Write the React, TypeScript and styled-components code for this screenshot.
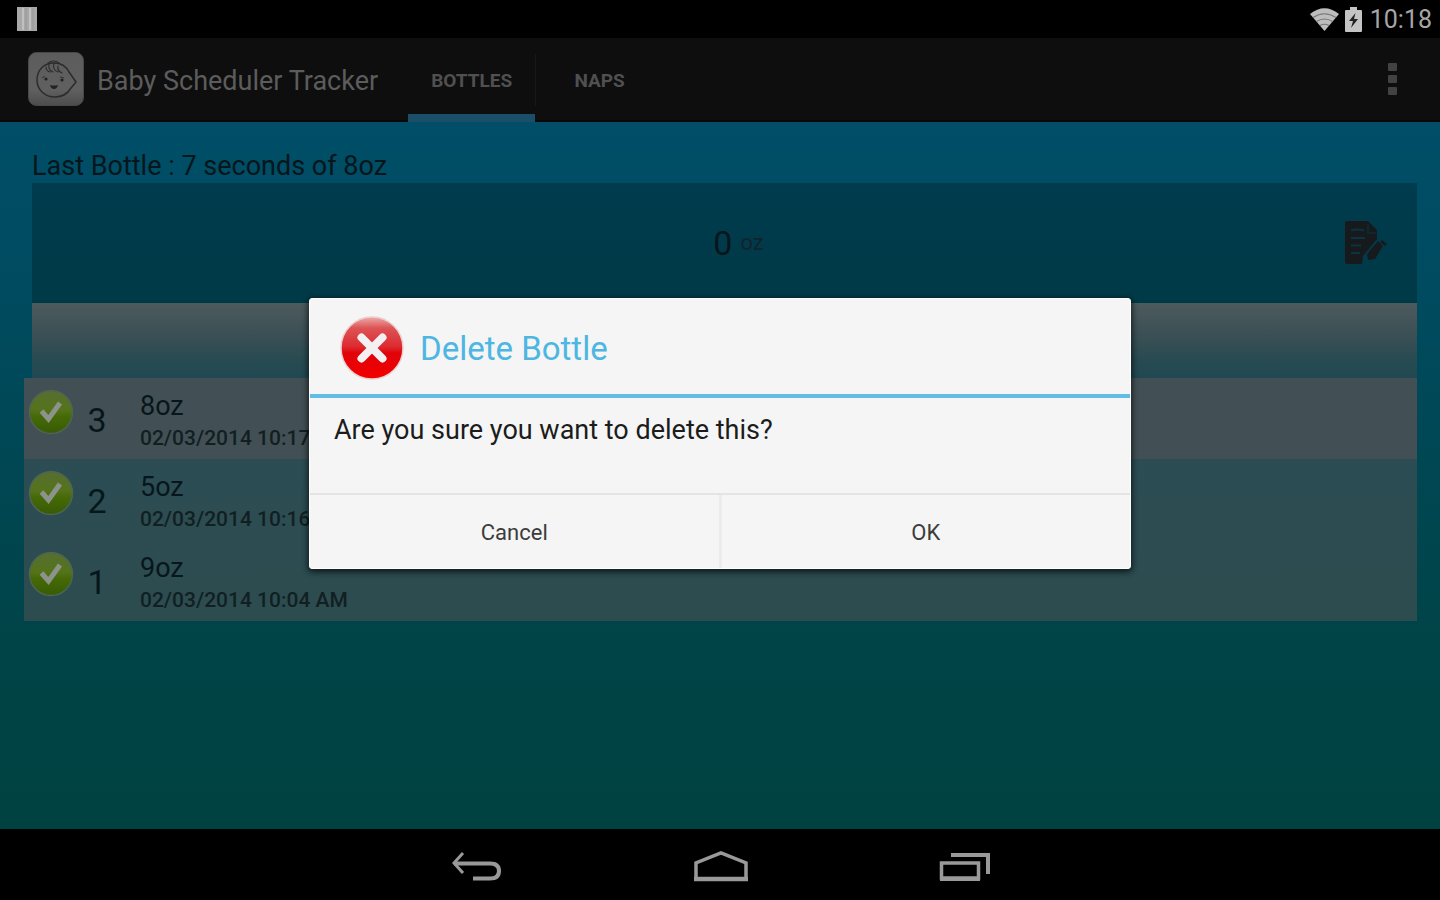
import React from "react";
import styled, { createGlobalStyle } from "styled-components";

const GlobalStyle = createGlobalStyle`
  *, *::before, *::after { box-sizing: border-box; }
  body { margin: 0; background: #000; font-family: Roboto, "Liberation Sans", sans-serif; }
  button { font: inherit; border: 0; padding: 0; background: none; color: inherit; cursor: pointer; }
  h1, h2, p, ul { margin: 0; padding: 0; font-weight: 400; }
  ul { list-style: none; }
  svg { display: block; flex: none; }
`;

const Screen = styled.div`
  display: flex;
  flex-direction: column;
  min-height: 100vh;
`;

const StatusBar = styled.header`
  display: flex;
  align-items: center;
  justify-content: space-between;
  height: 38px;
  padding: 0 8px 0 17px;
  background: #000;
`;

const StatusIcons = styled.div`
  display: flex;
  align-items: center;
  gap: 6px;
`;

const Clock = styled.time`
  margin-left: 2px;
  padding-top: 2px;
  font-size: 25px;
  line-height: 36px;
  color: #a6a6a6;
`;

const AppWindow = styled.div`
  position: relative;
  display: flex;
  flex-direction: column;
  flex: 1;
`;

const ActionBar = styled.div`
  display: flex;
  align-items: stretch;
  height: 84px;
  padding: 0 24px 0 28px;
  background: #0e0e0e;
  border-bottom: 2px solid #090708;
`;

const Brand = styled.div`
  display: flex;
  align-items: center;
  gap: 13px;
  margin-right: 30px;
`;

const AppTitle = styled.h1`
  font-size: 27px;
  line-height: 32px;
  padding-top: 4px;
  color: #5c5c5c;
`;

const Tabs = styled.nav`
  display: flex;
  margin-bottom: -2px;
`;

const Tab = styled.button<{ $active?: boolean }>`
  width: 127px;
  padding-top: 8px;
  border-bottom: 8px solid ${(p) => (p.$active ? "#1b4f69" : "transparent")};
  font-size: 19px;
  font-weight: 700;
  color: #505050;
`;

const TabDivider = styled.span`
  width: 1px;
  height: 52px;
  margin-top: 16px;
  background: #181818;
`;

const MenuButton = styled.button`
  display: flex;
  align-items: center;
  justify-content: center;
  width: 48px;
  margin-left: auto;
`;

const Content = styled.main`
  flex: 1;
  padding: 28px 23px 28px 24px;
  background: linear-gradient(#004e68 0%, #004a5d 30%, #004650 55%, #004447 75%, #004241 100%);
  color: #07161b;
`;

const Summary = styled.section`
  margin-left: 8px;
`;

const LastBottle = styled.p`
  font-size: 27px;
  line-height: 32px;
`;

const AmountPanel = styled.div`
  display: grid;
  grid-template-columns: 1fr auto 1fr;
  align-items: center;
  height: 120px;
  margin-top: 1px;
  padding: 0 30px;
  background: linear-gradient(#003b4e, #003a47);
`;

const Amount = styled.output`
  grid-column: 2;
  display: flex;
  align-items: center;
  gap: 8px;
  padding-left: 28px;
  font-size: 34px;
  line-height: 40px;
`;

const Unit = styled.span`
  font-size: 22px;
  color: #13232c;
`;

const EditButton = styled.button`
  justify-self: end;
`;

const ListHeading = styled.div`
  height: 75px;
  background: linear-gradient(#4d5a5d, #3c5055 40%, #284b51 75%, #214852);
`;

const Bottles = styled.ul`
  background: linear-gradient(#2c4d56, #2c4c4f);
`;

const BottleRow = styled.li<{ $selected?: boolean }>`
  display: flex;
  height: 81px;
  padding-left: 4px;
  background: ${(p) => (p.$selected ? "#425055" : "transparent")};
`;

const TickSlot = styled.div`
  padding-top: 10px;
`;

const RowNumber = styled.span`
  width: 46px;
  padding-top: 4px;
  text-align: center;
  font-size: 34px;
  line-height: 76px;
`;

const RowText = styled.div`
  padding: 12px 0 0 20px;
`;

const RowAmount = styled.p`
  font-size: 27px;
  line-height: 32px;
`;

const RowDate = styled.p`
  font-size: 21px;
  font-weight: 500;
  line-height: 32px;
  color: #121f22;
`;

const NavBar = styled.footer`
  display: flex;
  justify-content: center;
  height: 71px;
  background: #000;
`;

const NavButton = styled.button`
  display: flex;
  align-items: center;
  justify-content: center;
  width: 244px;
  padding: 4px 0 0 2px;
`;

const Overlay = styled.div`
  position: absolute;
  inset: 0;
  display: flex;
  align-items: center;
  justify-content: center;
`;

const Dialog = styled.div`
  width: 822px;
  max-width: 90%;
  background: #f5f5f5;
  border: 1px solid #fff;
  border-radius: 3px;
  box-shadow: 0 2px 6px 1px rgba(0, 0, 0, 0.7);
`;

const DialogHeader = styled.div`
  display: flex;
  align-items: center;
  gap: 16px;
  height: 99px;
  padding-left: 30px;
  border-bottom: 4px solid #62bce3;
`;

const DialogTitle = styled.h2`
  font-size: 33px;
  line-height: 40px;
  padding-top: 4px;
  color: #4db6e2;
`;

const DialogMessage = styled.p`
  height: 95px;
  padding: 16px 24px;
  font-size: 27px;
  line-height: 32px;
  color: #1c1c1c;
`;

const DialogActions = styled.div`
  display: flex;
  height: 75px;
  border-top: 2px solid #e4e4e4;
`;

const DialogButton = styled.button`
  flex: 1;
  padding-top: 2px;
  font-size: 22px;
  color: #3c3c3c;
  & + & { border-left: 3px solid #ececec; }
`;

const NotificationIcon = () => (
  <svg width="20" height="24" viewBox="0 0 20 24" aria-hidden="true">
    <path d="M0 0h20v24H0z" fill="#a8a8a8" />
    <path d="M6 1v22M13 1v22" stroke="#c0c0c0" strokeWidth="2" />
    <path d="M9 1v22M16 1v22" stroke="#989898" strokeWidth="1" />
  </svg>
);

const WifiIcon = () => (
  <svg width="29" height="23" viewBox="0 0 29 23" aria-hidden="true">
    <path d="M0 6Q14.500-5.500 29 6L14.500 23z" fill="#bdbdbd" />
    <path d="M3 9.500q11.500-7.500 23 0M6.500 13.500q8-5 16 0M10 17.500q4.500-2.500 9 0" fill="none" stroke="#777" strokeWidth="1.200" />
  </svg>
);

const BatteryIcon = () => (
  <svg width="17" height="25" viewBox="0 0 17 25" aria-hidden="true">
    <path d="M1 3h4V0h7v3h4q1 0 1 1v20q0 1-1 1H1q-1 0-1-1V4q0-1 1-1z" fill="#c4c4c4" />
    <path d="M10.500 6L4 14h4l-2 7 7-9H9z" fill="#222" />
  </svg>
);

const BabyIcon = () => (
  <svg width="56" height="54" viewBox="0 0 56 54" aria-hidden="true">
    <defs>
      <linearGradient id="babyTile" x1="0" y1="0" x2="0" y2="1">
        <stop offset="0" stopColor="#5c5c5c" />
        <stop offset="0.7" stopColor="#606060" />
        <stop offset="1" stopColor="#4c4c4c" />
      </linearGradient>
    </defs>
    <rect x="0.500" y="0.500" width="55" height="53" rx="8" fill="url(#babyTile)" stroke="#484848" />
    <g fill="none" stroke="#2c2c2c" strokeWidth="1.500" strokeLinejoin="round" strokeLinecap="round">
      <path d="M41 20C38 14 33 11 26 11C16 11 9 18 9 28C9 38 17 45 27 45C35 45 40 41 43 36L48 30z" />
      <path d="M18 15q0 4 4 5M21 12q-1 6 4 8M26 11q-2 7 4 9M30 14q-1 5 4 7M20 11q6-4 11 0" strokeWidth="1.100" />
    </g>
    <g fill="#222">
      <circle cx="18" cy="27" r="1.600" />
      <circle cx="34" cy="28" r="1.600" />
      <path d="M22 33q4 1 8 0q-1 4-4 4t-4-4z" />
    </g>
    <path d="M14 26l3-2M32 25l4 1" stroke="#333" />
  </svg>
);

const OverflowIcon = () => (
  <svg width="9" height="32" viewBox="0 0 9 32" fill="#424242" aria-hidden="true">
    <rect width="9" height="8" rx="1" />
    <rect y="12" width="9" height="8" rx="1" />
    <rect y="24" width="9" height="8" rx="1" />
  </svg>
);

const EditIcon = () => (
  <svg width="42" height="44" viewBox="0 0 42 44" aria-hidden="true">
    <path d="M2 0h21l9 9v9L18 35l-1 8H2q-2 0-2-2V2q0-2 2-2z" fill="#171a1c" />
    <path d="M23 3v9h8" fill="none" stroke="#0b2c36" strokeWidth="1.500" />
    <path d="M6 9.500q6-2 13 0M6 17h14M6 24.500h10M6 32h9" fill="none" stroke="#0b3340" strokeWidth="2" />
    <path d="M33 20l5 5-8 13-7 1-1-6z" fill="#171a1c" />
    <path d="M37 19l5 4-2 2-5-4z" fill="#171a1c" />
  </svg>
);

const TickIcon = () => (
  <svg width="46" height="48" viewBox="0 0 46 48" aria-hidden="true">
    <defs>
      <linearGradient id="tickFill" x1="0" y1="0" x2="0" y2="1">
        <stop offset="0" stopColor="#566e32" />
        <stop offset="0.45" stopColor="#55731a" />
        <stop offset="0.6" stopColor="#466a07" />
        <stop offset="1" stopColor="#375a05" />
      </linearGradient>
    </defs>
    <circle cx="23" cy="24" r="21.500" fill="url(#tickFill)" stroke="#4d6552" strokeWidth="1.500" />
    <path d="M13.500 23l7 8L32 15" fill="none" stroke="#8b938a" strokeWidth="5" />
  </svg>
);

const DeleteIcon = () => (
  <svg width="64" height="66" viewBox="0 0 64 66" aria-hidden="true">
    <defs>
      <linearGradient id="deleteFill" x1="0" y1="0" x2="0" y2="1">
        <stop offset="0" stopColor="#eeaaaa" />
        <stop offset="0.18" stopColor="#dd5355" />
        <stop offset="0.48" stopColor="#dc2b30" />
        <stop offset="0.58" stopColor="#e00309" />
        <stop offset="1" stopColor="#f30000" />
      </linearGradient>
    </defs>
    <circle cx="32" cy="34" r="31" fill="url(#deleteFill)" stroke="#eccfcf" strokeWidth="1.500" />
    <path d="M21.500 23.500l21 21M42.500 23.500l-21 21" stroke="#f3f0f3" strokeWidth="8" strokeLinecap="round" />
  </svg>
);

const BackIcon = () => (
  <svg width="50" height="30" viewBox="0 0 50 30" fill="none" stroke="#999" aria-hidden="true">
    <path d="M11 1L2 11l9 10" strokeWidth="3" />
    <path d="M2 11.500h36q9 0 9 7.500t-9 7.500H21" strokeWidth="4" />
  </svg>
);

const HomeIcon = () => (
  <svg width="56" height="32" viewBox="0 0 56 32" fill="none" stroke="#999" aria-hidden="true">
    <path d="M3 28V12L28 2l25 10v16" strokeWidth="3.500" />
    <path d="M1 28h54" strokeWidth="4.500" />
  </svg>
);

const RecentIcon = () => (
  <svg width="52" height="32" viewBox="0 0 52 32" fill="none" stroke="#999" aria-hidden="true">
    <path d="M2.500 12h37v15h-37z" strokeWidth="3.500" />
    <path d="M12 4h37v19" strokeWidth="4" />
    <path d="M1 28h40" strokeWidth="4" />
  </svg>
);

const bottles = [
  { number: 3, amount: "8oz", date: "02/03/2014 10:17 AM", selected: true },
  { number: 2, amount: "5oz", date: "02/03/2014 10:16 AM", selected: false },
  { number: 1, amount: "9oz", date: "02/03/2014 10:04 AM", selected: false },
];

export default function App() {
  return (
    <Screen>
      <GlobalStyle />
      <StatusBar>
        <NotificationIcon />
        <StatusIcons>
          <WifiIcon />
          <BatteryIcon />
          <Clock>10:18</Clock>
        </StatusIcons>
      </StatusBar>
      <AppWindow>
        <ActionBar>
          <Brand>
            <BabyIcon />
            <AppTitle>Baby Scheduler Tracker</AppTitle>
          </Brand>
          <Tabs>
            <Tab $active>BOTTLES</Tab>
            <TabDivider />
            <Tab>NAPS</Tab>
          </Tabs>
          <MenuButton aria-label="More options">
            <OverflowIcon />
          </MenuButton>
        </ActionBar>
        <Content>
          <Summary>
            <LastBottle>Last Bottle : 7 seconds of 8oz</LastBottle>
            <AmountPanel>
              <Amount>
                0 <Unit>oz</Unit>
              </Amount>
              <EditButton aria-label="Add bottle">
                <EditIcon />
              </EditButton>
            </AmountPanel>
            <ListHeading />
          </Summary>
          <Bottles>
            {bottles.map((b) => (
              <BottleRow key={b.number} $selected={b.selected}>
                <TickSlot>
                  <TickIcon />
                </TickSlot>
                <RowNumber>{b.number}</RowNumber>
                <RowText>
                  <RowAmount>{b.amount}</RowAmount>
                  <RowDate>{b.date}</RowDate>
                </RowText>
              </BottleRow>
            ))}
          </Bottles>
        </Content>
        <Overlay>
          <Dialog role="dialog" aria-modal="true" aria-labelledby="dialog-title">
            <DialogHeader>
              <DeleteIcon />
              <DialogTitle id="dialog-title">Delete Bottle</DialogTitle>
            </DialogHeader>
            <DialogMessage>Are you sure you want to delete this?</DialogMessage>
            <DialogActions>
              <DialogButton>Cancel</DialogButton>
              <DialogButton>OK</DialogButton>
            </DialogActions>
          </Dialog>
        </Overlay>
      </AppWindow>
      <NavBar>
        <NavButton aria-label="Back">
          <BackIcon />
        </NavButton>
        <NavButton aria-label="Home">
          <HomeIcon />
        </NavButton>
        <NavButton aria-label="Recent apps">
          <RecentIcon />
        </NavButton>
      </NavBar>
    </Screen>
  );
}
